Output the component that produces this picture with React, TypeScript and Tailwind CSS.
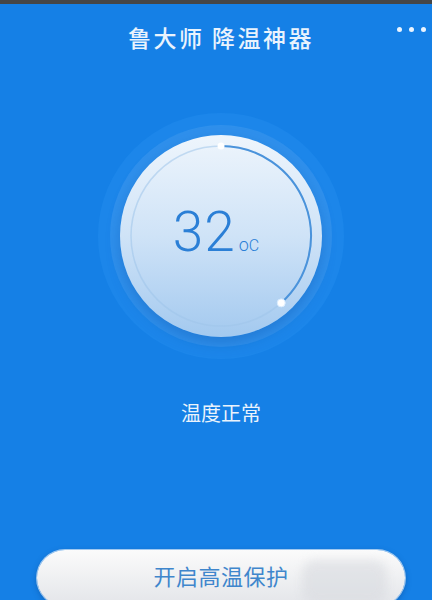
const CJK = { fontFamily: '"Noto Sans CJK SC", "Noto Sans", sans-serif' };

// arc from 12 o'clock clockwise to ~138deg, radius 90 inside a 202px disk
const R = 90;
const C = 101;
const END = (138 * Math.PI) / 180;
const ex = C + R * Math.sin(END);
const ey = C - R * Math.cos(END);

function Gauge({ value }: { value: number }) {
  return (
    <div className="w-[246px] h-[246px] rounded-full bg-[#1c86ea] flex items-center justify-center">
      <div className="w-[222px] h-[222px] rounded-full bg-[#2f90ec] flex items-center justify-center">
        <div className="relative w-[202px] h-[202px] rounded-full bg-gradient-to-b from-[#eef5fc] via-[#cfe3f7] to-[#a3c9ef] shadow-[0_6px_14px_rgba(10,80,170,0.35)] flex items-center justify-center">
          <svg className="absolute inset-0" width="202" height="202" viewBox="0 0 202 202">
            <circle cx={C} cy={C} r={R} fill="none" stroke="#9fc4ea" strokeOpacity="0.55" strokeWidth="1.5" />
            <path
              d={`M ${C} ${C - R} A ${R} ${R} 0 0 1 ${ex} ${ey}`}
              fill="none"
              stroke="#4a93db"
              strokeWidth="2"
            />
            <circle cx={C} cy={C - R} r="3.5" fill="#ffffff" />
            <circle cx={ex} cy={ey} r="4" fill="#ffffff" stroke="#d9ecff" strokeWidth="1" />
          </svg>
          <div
            className="relative flex items-baseline text-[#2b7fd6] -mt-[8px] -ml-[10px]"
            style={{ fontFamily: 'Roboto, "Liberation Sans", sans-serif' }}
          >
            <span className="text-[55px] leading-none font-light tracking-[1px]">{value}</span>
            <span className="text-[18px] leading-none font-light ml-[3px]">o</span>
            <span className="text-[16px] leading-none font-light">C</span>
          </div>
        </div>
      </div>
    </div>
  );
}

export default function App() {
  return (
    <div className="w-[432px] h-[600px] overflow-hidden bg-[#1580e6] flex flex-col" style={CJK}>
      <div className="h-[4px] bg-[#464646] shrink-0" />
      <div className="relative h-[66px] shrink-0 flex items-center justify-center pl-[10px]">
        <span className="text-[23px] leading-none font-medium tracking-[2.5px] text-[#e9f3fd]">
          鲁大师 降温神器
        </span>
        <div className="absolute right-[6px] top-[23px] flex gap-[7px]">
          <span className="w-[5px] h-[5px] rounded-full bg-[#eaf4ff]" />
          <span className="w-[5px] h-[5px] rounded-full bg-[#eaf4ff]" />
          <span className="w-[5px] h-[5px] rounded-full bg-[#eaf4ff]" />
        </div>
      </div>

      <div className="flex flex-col items-center pl-[10px]">
        <div className="mt-[43px]">
          <Gauge value={32} />
        </div>
        <div className="mt-[44px] text-[20px] leading-[20px] text-[#eaf3fc]">温度正常</div>
        <button className="relative mt-[127px] w-[368px] h-[56px] shrink-0 rounded-full bg-gradient-to-b from-[#fbfbfb] to-[#e3e5e9] shadow-[0_0_0_1px_rgba(255,255,255,0.6),0_2px_6px_rgba(0,40,100,0.35)] flex items-start justify-center pt-[13px] overflow-hidden">
          <span className="absolute left-[265px] top-[10px] w-[85px] h-[44px] rounded-[14px] bg-[#d8dadf] opacity-60 blur-[5px]" />
          <span className="relative text-[22px] leading-[24px] text-[#3f86cc] tracking-[0.5px]">开启高温保护</span>
        </button>
      </div>
    </div>
  );
}
